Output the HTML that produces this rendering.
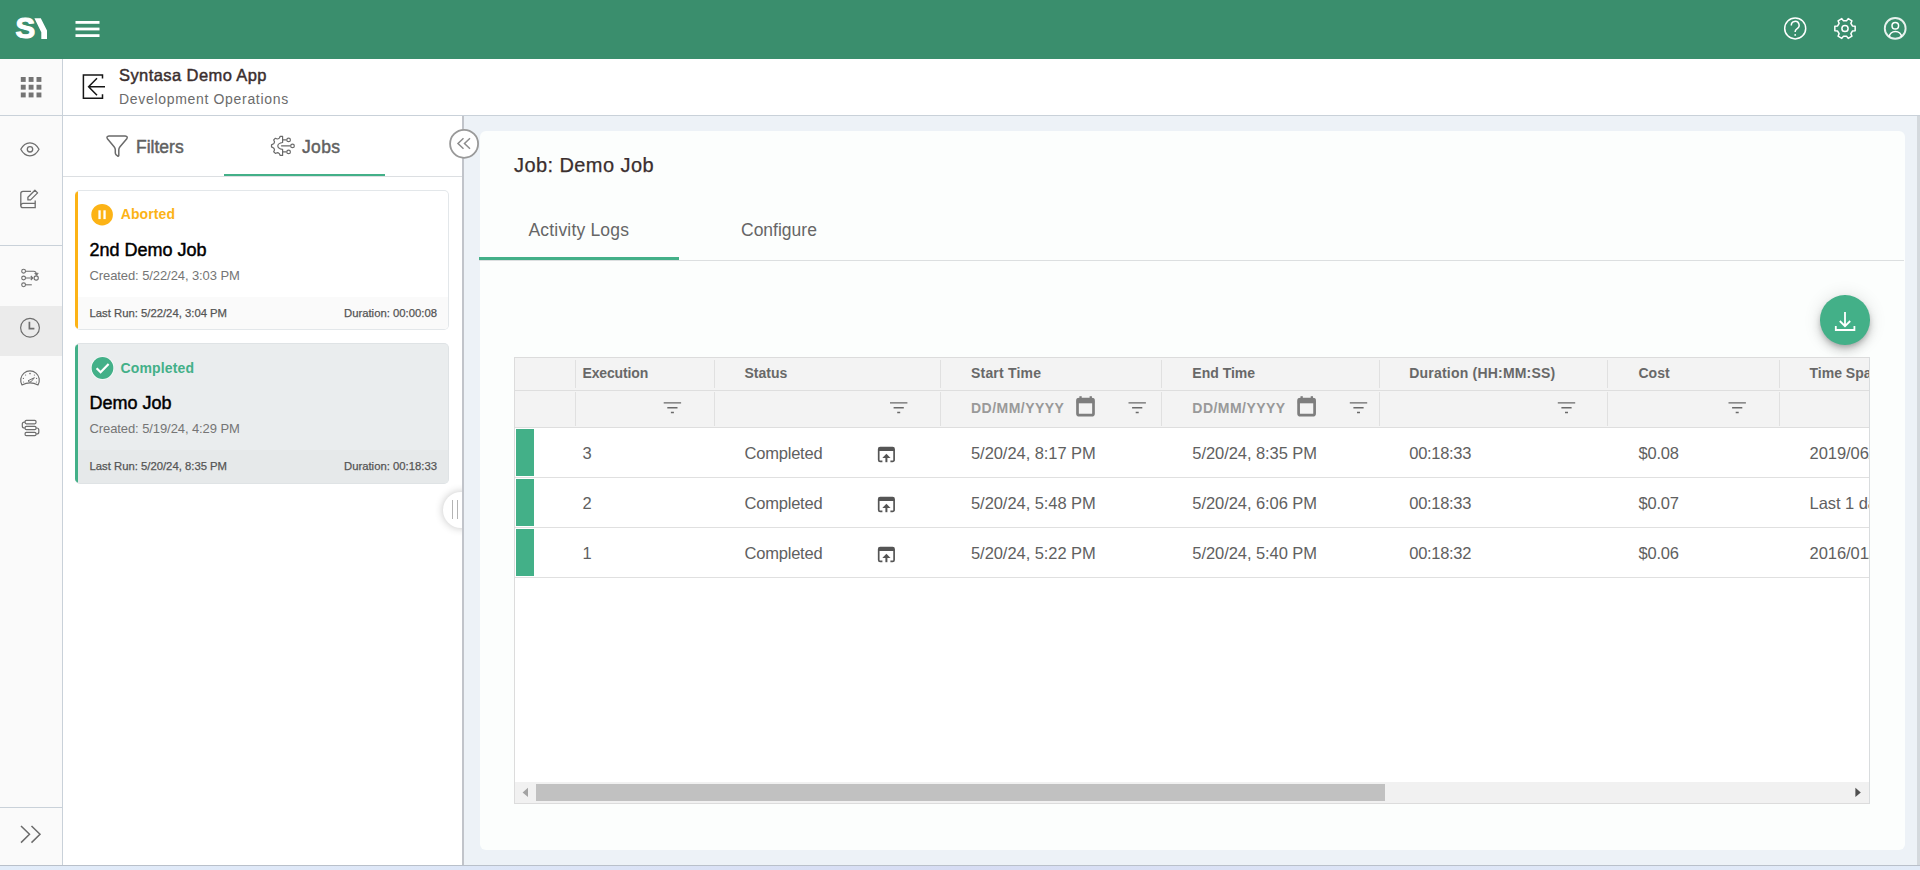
<!DOCTYPE html>
<html lang="en">
<head>
<meta charset="utf-8">
<title>Syntasa Demo App - Development Operations</title>
<style>
*{box-sizing:border-box;margin:0;padding:0}
html,body{width:1920px;height:870px;overflow:hidden;background:#fff}
body{font-family:"Liberation Sans",sans-serif;position:relative;color:#555}
.abs{position:absolute}
.t{position:absolute;white-space:nowrap;line-height:1}
.med{-webkit-text-stroke:0.45px currentColor}
.med2{-webkit-text-stroke:0.25px currentColor}
svg{position:absolute;overflow:visible}
/* top bar */
#topbar{left:0;top:0;width:1920px;height:59px;background:#3a8e6d}
/* left nav */
#nav{left:0;top:59px;width:63px;height:806px;background:#fafafa;border-right:1px solid #c9d1d9}
#navsel{left:0;top:306px;width:62px;height:50px;background:#ebebeb}
.hline{position:absolute;height:1px;background:#c9d1d9}
/* app header */
#apphead{left:63px;top:59px;width:1857px;height:57px;background:#fff;border-bottom:1px solid #c9d1d9}
/* side panel */
#side{left:63px;top:116px;width:399px;height:749px;background:#fff}
#splitter{left:462px;top:116px;width:2px;height:749px;background:#c1c4ca}
/* main */
#main{left:464px;top:116px;width:1453px;height:749px;background:#edf2f7}
#panel{left:479.5px;top:131px;width:1425.5px;height:719px;background:#fcfefd;border-radius:6px}
#rightedge{left:1917px;top:116px;width:3px;height:749px;background:#d4d9dd}
#bottomedge{left:0;top:865px;width:1920px;height:5px;background:linear-gradient(90deg,#e2ecf9 0%,#dde6f7 25%,#d6dcf3 50%,#dde5f6 75%,#e2ebf8 100%);border-top:1px solid #b9c0ca}
/* cards */
.card{position:absolute;left:75px;width:374px;border:1px solid #e3e7ea;border-left:0;border-radius:5px;background:#fff;overflow:hidden}
.card .bar{position:absolute;left:0;top:0;bottom:0;width:3px}
.card .foot{position:absolute;left:3px;right:0;bottom:0;height:32px;background:#fafafa}
/* table */
#grid{left:514px;top:357px;width:1356px;height:447px;border:1px solid #dcdcdc;background:#fff;overflow:hidden}
#ghead{left:0;top:0;width:1354px;height:70px;background:#f3f3f3;border-bottom:1px solid #dedede}
.vsep{position:absolute;width:1px;background:#e0e0e0}
.rowline{position:absolute;left:0;width:1354px;height:1px;background:#e0e0e0}
.gbar{position:absolute;left:1px;width:18px;background:#43b088}
.th{font-weight:bold;font-size:14px;color:#686868}
.td{font-size:16.5px;color:#606060}
.ph{font-weight:bold;font-size:14px;color:#999;letter-spacing:0.47px}
</style>
</head>
<body>
<div id="topbar" class="abs"></div>
<div id="nav" class="abs"></div>
<div id="navsel" class="abs"></div>
<div id="apphead" class="abs"></div>
<div class="hline" style="left:0;top:115px;width:63px"></div>
<div class="hline" style="left:0;top:245px;width:62px"></div>
<div class="hline" style="left:0;top:807px;width:62px"></div>
<div id="side" class="abs"></div>
<div id="main" class="abs"></div>
<div id="splitter" class="abs"></div>
<div id="panel" class="abs"></div>
<div id="rightedge" class="abs"></div>
<div id="bottomedge" class="abs"></div>

<!-- TOPBAR-CONTENT -->
<div class="t" id="x_logoS" style="left:15.4px;top:13px;font-size:29.5px;font-weight:bold;color:#fff;-webkit-text-stroke:1.1px #fff">S</div>
<svg style="left:0;top:0" width="120" height="59" viewBox="0 0 120 59">
  <polygon points="34.4,18.2 40.8,18.2 47,30.4 47,39.1 41.3,39.1 41.3,32.2" fill="#fff"/>
  <rect x="75.5" y="21" width="24" height="2.8" fill="#fff"/>
  <rect x="75.5" y="27.6" width="24" height="2.8" fill="#fff"/>
  <rect x="75.5" y="34.2" width="24" height="2.8" fill="#fff"/>
</svg>
<svg style="left:1780px;top:13px" width="130" height="32" viewBox="1780 13 130 32" fill="none" stroke="#fff" stroke-width="1.5">
  <!-- help -->
  <circle cx="1795.2" cy="28.4" r="10.5"/>
  <path d="M1791.3 25.4 a3.9 3.9 0 1 1 5.6 3.4 c-1.2 0.7 -1.7 1.3 -1.7 2.6 v0.6" stroke-linecap="butt"/>
  <circle cx="1795.2" cy="34.9" r="0.9" fill="#fff" stroke="none"/>
  <!-- gear -->
  <circle cx="1845" cy="28.5" r="3.1"/>
  <path d="M1852.38 25.97 L1855.17 26.33 L1855.17 30.67 L1852.38 31.03 L1850.88 33.63 L1851.96 36.22 L1848.21 38.39 L1846.50 36.15 L1843.50 36.15 L1841.79 38.39 L1838.04 36.22 L1839.12 33.63 L1837.62 31.03 L1834.83 30.67 L1834.83 26.33 L1837.62 25.97 L1839.12 23.37 L1838.04 20.78 L1841.79 18.61 L1843.50 20.85 L1846.50 20.85 L1848.21 18.61 L1851.96 20.78 L1850.88 23.37 Z" stroke-linejoin="round"/>
  <!-- user -->
  <circle cx="1895.2" cy="28.4" r="10.4" stroke-width="1.9" stroke-opacity="0.88"/>
  <circle cx="1895.3" cy="25.8" r="3.3"/>
  <path d="M1889.3 37 a6.1 5.6 0 0 1 12.2 0"/>
</svg>

<!-- NAV-ICONS -->
<svg style="left:0;top:59px" width="62" height="806" viewBox="0 59 62 806" fill="none" stroke="#6e6e6e" stroke-width="1.3">
  <!-- apps grid -->
  <g fill="#747474" stroke="none">
    <rect x="20.80" y="77.00" width="4.9" height="4.9"/><rect x="28.65" y="77.00" width="4.9" height="4.9"/><rect x="36.50" y="77.00" width="4.9" height="4.9"/>
    <rect x="20.80" y="84.75" width="4.9" height="4.9"/><rect x="28.65" y="84.75" width="4.9" height="4.9"/><rect x="36.50" y="84.75" width="4.9" height="4.9"/>
    <rect x="20.80" y="92.50" width="4.9" height="4.9"/><rect x="28.65" y="92.50" width="4.9" height="4.9"/><rect x="36.50" y="92.50" width="4.9" height="4.9"/>
  </g>
  <!-- eye -->
  <path d="M20.8 149.3 C23.2 144.6 26.4 142.8 29.9 142.8 C33.4 142.8 36.6 144.6 39 149.3 C36.6 154 33.4 155.8 29.9 155.8 C26.4 155.8 23.2 154 20.8 149.3 Z" stroke-linejoin="round"/>
  <circle cx="30" cy="149.3" r="2.7"/>
  <!-- edit -->
  <path d="M31 191.4 H23 a2.2 2.2 0 0 0 -2.2 2.2 V205.4 a2.2 2.2 0 0 0 2.2 2.2 H35.2 V200.4" />
  <path d="M20.8 205.6 a2.2 2.2 0 0 1 2.2 -2.2 H35.2" />
  <path d="M27.9 199.9 L27.9 197.2 L34.9 190.2 L37.6 192.9 L30.6 199.9 Z" stroke-linejoin="round"/>
  <!-- pipeline -->
  <g stroke-width="1.1">
  <circle cx="23.6" cy="271.2" r="1.9"/><circle cx="23.6" cy="278" r="1.9"/><circle cx="23.6" cy="284.8" r="1.9"/><circle cx="36.2" cy="278" r="2.1"/>
  <path d="M25.6 271.2 H33.6 Q36.3 271.2 36.6 274.6 M34.6 273.2 L36.7 275 L38.2 272.9"/>
  <path d="M25.6 278 H32.6 M30.8 276 L32.8 278 L30.8 280"/>
  <path d="M25.6 284.8 H31.8"/>
  </g>
  <!-- clock -->
  <circle cx="30" cy="327.8" r="9.4" stroke-width="1.2"/>
  <path d="M29.4 321.8 V328.6 H34.4" stroke-width="1.7"/>
  <!-- gauge -->
  <path d="M22 385 A9.3 9.3 0 1 1 38 385 Q30 380.8 22 385 Z" stroke-linejoin="round" stroke-width="1.2"/>
  <path d="M28 380.8 L34.4 377.7 L31 381.8 Q29 382.6 28 380.8 Z" stroke-width="1" stroke-linejoin="round"/>
  <g fill="#6e6e6e" stroke="none"><circle cx="30" cy="373.6" r="0.8"/><circle cx="25.6" cy="375" r="0.6"/><circle cx="34.4" cy="375" r="0.6"/><circle cx="23.4" cy="378.4" r="0.6"/><circle cx="36.6" cy="378.4" r="0.6"/><circle cx="23.6" cy="382" r="0.6"/><circle cx="36.4" cy="382" r="0.6"/></g>
  <!-- stack -->
  <g stroke-width="1.2">
  <rect x="25.1" y="420.4" width="10.9" height="3.4" rx="1.2"/>
  <rect x="25.1" y="426.3" width="10.9" height="3.4" rx="1.2"/>
  <rect x="25.1" y="432.3" width="10.9" height="3.4" rx="1.2"/>
  <path d="M25.1 422.1 H24.3 a2 2 0 0 0 -2 2 V426 a2 2 0 0 0 2 2 H25.1"/>
  <path d="M36 428 H36.8 a2 2 0 0 1 2 2 V432 a2 2 0 0 1 -2 2 H36"/>
  </g>
  <!-- expand >> -->
  <path d="M21 826 L29.5 834.3 L21 842.6 M31.5 826 L40 834.3 L31.5 842.6" stroke-width="1.5" stroke="#6b6b6b"/>
</svg>

<!-- APPHEAD-CONTENT -->
<svg style="left:78px;top:70px" width="32" height="34" viewBox="78 70 32 34" fill="none" stroke="#161616" stroke-width="1.5">
  <path d="M102.5 78.6 V75 H83.4 V98.3 H102.5 V94.3"/>
  <path d="M105 86.7 H89 M97 78.2 L88.6 86.7 L97 95.2"/>
</svg>
<div class="t med" id="x_apptitle" style="left:119px;top:66.7px;font-size:16.5px;letter-spacing:0.42px;color:#3a2e2e">Syntasa Demo App</div>
<div class="t" id="x_appsub" style="left:119px;top:91.5px;font-size:14px;letter-spacing:0.68px;color:#6b6b6b">Development Operations</div>

<!-- SIDE-CONTENT -->
<div class="hline" style="left:63px;top:176px;width:399px;background:#dcdfe2"></div>
<div class="abs" style="left:224px;top:174px;width:161px;height:2px;background:#43b088"></div>
<svg style="left:100px;top:130px" width="200" height="32" viewBox="100 130 200 32" fill="none" stroke="#6a6a6a" stroke-width="1.3">
  <!-- funnel -->
  <path d="M109 135.9 H125.2 Q128.2 136.2 126.8 138.7 L120 146.8 Q118.8 148.2 118.8 149.8 V155.4 Q118.7 156.6 117.6 156 L116 154.6 Q115.3 153.9 115.3 152.8 V149.8 Q115.3 148.2 114.1 146.8 L107.4 138.7 Q106 136.2 109 135.9 Z" stroke-width="1.5" stroke-linejoin="round"/>
  <!-- jobs icon -->
  <g stroke-width="1.2" stroke-linejoin="round">
  <path d="M282.6 136.4 H280.2 L279.3 138.1 Q278.4 138.9 277.2 139 L275.4 138.3 L273.7 139.9 L274.5 141.8 Q274.3 143 273.6 143.8 L271.5 144.9 V146.9 L273.6 148 Q274.3 148.8 274.5 149.9 L273.7 151.8 L275.4 153.4 L277.2 152.7 Q278.4 152.8 279.3 153.6 L280.2 155.4 H282.6 V149.3 Q277.9 148.6 277.8 145.9 Q277.9 143.2 282.6 142.5 Z"/>
  <path d="M282.8 139.9 H286.6 M281.1 145.9 H290.5 M282.8 151.9 H286.6" stroke-width="1.4"/>
  <circle cx="288.6" cy="139.9" r="1.8"/><circle cx="292.5" cy="145.9" r="1.8"/><circle cx="288.6" cy="151.9" r="1.8"/>
  </g>
</svg>
<div class="t med" id="x_filters" style="left:136px;top:139px;font-size:17.5px;color:#616161">Filters</div>
<div class="t med" id="x_jobs" style="left:302px;top:139px;font-size:17.5px;letter-spacing:0.35px;color:#616161">Jobs</div>

<div class="card" style="top:190px;height:140px">
  <div class="bar" style="background:#fcb316"></div><div class="foot"></div>
</div>
<div class="card" style="top:343px;height:141px;background:#eaedee;border-color:#dfe3e5">
  <div class="bar" style="background:#43b088"></div><div class="foot" style="background:#e6e9ea;height:33px"></div>
</div>
<svg style="left:88px;top:200px" width="30" height="184" viewBox="88 200 30 184">
  <circle cx="102.1" cy="214.7" r="10.8" fill="#fcb316"/>
  <rect x="98.4" y="210.3" width="2.3" height="8.8" fill="#fff"/><rect x="103.4" y="210.3" width="2.3" height="8.8" fill="#fff"/>
  <circle cx="102.5" cy="368" r="11.6" fill="#fff"/>
  <circle cx="102.5" cy="368" r="10.9" fill="#43b088"/>
  <path d="M96.6 368.3 L100.6 372.3 L108.6 364.1" fill="none" stroke="#fff" stroke-width="2.2"/>
</svg>
<div class="t" id="x_aborted" style="left:120.7px;top:207px;font-size:14px;letter-spacing:0.12px;font-weight:bold;color:#fcb316">Aborted</div>
<div class="t med" id="x_c1title" style="left:89.5px;top:240.5px;font-size:18px;color:#000">2nd Demo Job</div>
<div class="t" id="x_c1created" style="left:89.5px;top:269px;font-size:13px;letter-spacing:-0.09px;color:#757575">Created: 5/22/24, 3:03 PM</div>
<div class="t med2" id="x_c1last" style="left:89.5px;top:307.5px;font-size:11.3px;color:#555">Last Run: 5/22/24, 3:04 PM</div>
<div class="t med2" id="x_c1dur" style="left:344px;top:307.5px;font-size:11.3px;color:#555">Duration: 00:00:08</div>

<div class="t" id="x_completed" style="left:120.5px;top:360.5px;font-size:14px;letter-spacing:0.14px;font-weight:bold;color:#43b088">Completed</div>
<div class="t med" id="x_c2title" style="left:89.5px;top:393.5px;font-size:18px;color:#000">Demo Job</div>
<div class="t" id="x_c2created" style="left:89.5px;top:422px;font-size:13px;letter-spacing:-0.09px;color:#757575">Created: 5/19/24, 4:29 PM</div>
<div class="t med2" id="x_c2last" style="left:89.5px;top:460.5px;font-size:11.3px;color:#555">Last Run: 5/20/24, 8:35 PM</div>
<div class="t med2" id="x_c2dur" style="left:344px;top:460.5px;font-size:11.3px;color:#555">Duration: 00:18:33</div>

<!-- drag handle -->
<div class="abs" style="left:425px;top:480px;width:37px;height:60px;overflow:hidden">
  <div class="abs" style="left:18px;top:12px;width:36px;height:36px;border-radius:50%;background:#fff;box-shadow:0 0 9px rgba(0,0,0,.24)"></div>
  <div class="abs" style="left:27px;top:20px;width:1px;height:19px;background:#b4b4b4"></div>
  <div class="abs" style="left:32px;top:20px;width:1px;height:19px;background:#b4b4b4"></div>
</div>
<!-- collapse button -->
<svg style="left:447px;top:127px" width="34" height="34" viewBox="447 127 34 34" fill="none">
  <circle cx="464.1" cy="143.8" r="14" fill="#fff" stroke="#999" stroke-width="1.8"/>
  <path d="M463.5 138.3 L458 143.5 L463.5 148.7 M470 138.3 L464.5 143.5 L470 148.7" stroke="#8c8c8c" stroke-width="1.5"/>
</svg>

<!-- MAIN-CONTENT -->
<div class="t med2" id="x_title" style="left:514px;top:155px;font-size:20px;letter-spacing:0.42px;color:#3a2e2e">Job: Demo Job</div>
<div class="t" id="x_tab1" style="left:528.5px;top:221.6px;font-size:17.5px;letter-spacing:0.18px;color:#666">Activity Logs</div>
<div class="t" id="x_tab2" style="left:741px;top:221.6px;font-size:17.5px;color:#666">Configure</div>
<div class="hline" style="left:479px;top:260px;width:1425px;background:#dcdfe0"></div>
<div class="abs" style="left:479px;top:257px;width:200px;height:3px;background:#43b088"></div>
<!-- FAB -->
<div class="abs" style="left:1820.3px;top:295.1px;width:49.6px;height:49.6px;border-radius:50%;background:#43b088;box-shadow:0 3px 5px -1px rgba(0,0,0,.2),0 6px 10px 0 rgba(0,0,0,.14),0 1px 18px 0 rgba(0,0,0,.12)"></div>
<svg style="left:1830px;top:306px" width="30" height="30" viewBox="1830 306 30 30" fill="none" stroke="#fff" stroke-width="1.5">
  <path d="M1845 312 V326 M1839.8 321 L1845 326.2 L1850.2 321 M1835.8 326 V330 H1854.4 V326" stroke-width="1.8"/>
</svg>
<!-- GRID -->
<div id="grid" class="abs"><div id="ghead" class="abs"></div></div>
<div class="rowline" style="left:515px;top:390px;background:#dedede"></div>
<div class="vsep" style="left:575px;top:360px;height:28px"></div><div class="vsep" style="left:575px;top:392px;height:34px"></div><div class="vsep" style="left:714px;top:360px;height:28px"></div><div class="vsep" style="left:714px;top:392px;height:34px"></div><div class="vsep" style="left:940px;top:360px;height:28px"></div><div class="vsep" style="left:940px;top:392px;height:34px"></div><div class="vsep" style="left:1161px;top:360px;height:28px"></div><div class="vsep" style="left:1161px;top:392px;height:34px"></div><div class="vsep" style="left:1379px;top:360px;height:28px"></div><div class="vsep" style="left:1379px;top:392px;height:34px"></div><div class="vsep" style="left:1607px;top:360px;height:28px"></div><div class="vsep" style="left:1607px;top:392px;height:34px"></div><div class="vsep" style="left:1779px;top:360px;height:28px"></div><div class="vsep" style="left:1779px;top:392px;height:34px"></div>
<div class="abs" style="left:1779px;top:357px;width:91px;height:447px;overflow:hidden">
  <div class="t th" id="x_h7" style="left:30.5px;top:9px">Time Span</div>
  <div class="t td" id="x_r0ts" style="letter-spacing:-0.05px;left:30.5px;top:88.3px">2019/06/01</div>
  <div class="t td" id="x_r1ts" style="letter-spacing:-0.05px;left:30.5px;top:138.3px">Last 1 day</div>
  <div class="t td" id="x_r2ts" style="letter-spacing:-0.05px;left:30.5px;top:188.3px">2016/01/01</div>
</div>
<div class="t th" id="x_h1" style="letter-spacing:-0.15px;left:582.5px;top:366px">Execution</div>
<div class="t th" id="x_h2" style="left:744.5px;top:366px">Status</div>
<div class="t th" id="x_h3" style="letter-spacing:0.19px;left:971px;top:366px">Start Time</div>
<div class="t th" id="x_h4" style="left:1192.3px;top:366px">End Time</div>
<div class="t th" id="x_h5" style="letter-spacing:0.2px;left:1409.3px;top:366px">Duration (HH:MM:SS)</div>
<div class="t th" id="x_h6" style="left:1638.5px;top:366px">Cost</div>
<div class="t ph" id="x_ph1" style="left:971px;top:401px">DD/MM/YYYY</div>
<div class="t ph" id="x_ph2" style="left:1192.3px;top:401px">DD/MM/YYYY</div>
<div class="gbar" style="left:516px;top:429px;height:47px"></div>
<div class="rowline" style="left:515px;top:477px"></div>
<div class="t td" id="x_r0n" style="left:582.5px;top:445.3px">3</div>
<div class="t td" id="x_r0s" style="letter-spacing:-0.21px;left:744.5px;top:445.3px">Completed</div>
<div class="t td" id="x_r0st" style="letter-spacing:-0.06px;left:971px;top:445.3px">5/20/24, 8:17 PM</div>
<div class="t td" id="x_r0et" style="letter-spacing:-0.06px;left:1192.3px;top:445.3px">5/20/24, 8:35 PM</div>
<div class="t td" id="x_r0du" style="letter-spacing:-0.3px;left:1409.3px;top:445.3px">00:18:33</div>
<div class="t td" id="x_r0co" style="letter-spacing:-0.23px;left:1638.5px;top:445.3px">$0.08</div>
<div class="gbar" style="left:516px;top:479px;height:47px"></div>
<div class="rowline" style="left:515px;top:527px"></div>
<div class="t td" id="x_r1n" style="left:582.5px;top:495.3px">2</div>
<div class="t td" id="x_r1s" style="letter-spacing:-0.21px;left:744.5px;top:495.3px">Completed</div>
<div class="t td" id="x_r1st" style="letter-spacing:-0.06px;left:971px;top:495.3px">5/20/24, 5:48 PM</div>
<div class="t td" id="x_r1et" style="letter-spacing:-0.06px;left:1192.3px;top:495.3px">5/20/24, 6:06 PM</div>
<div class="t td" id="x_r1du" style="letter-spacing:-0.3px;left:1409.3px;top:495.3px">00:18:33</div>
<div class="t td" id="x_r1co" style="letter-spacing:-0.23px;left:1638.5px;top:495.3px">$0.07</div>
<div class="gbar" style="left:516px;top:529px;height:47px"></div>
<div class="rowline" style="left:515px;top:577px"></div>
<div class="t td" id="x_r2n" style="left:582.5px;top:545.3px">1</div>
<div class="t td" id="x_r2s" style="letter-spacing:-0.21px;left:744.5px;top:545.3px">Completed</div>
<div class="t td" id="x_r2st" style="letter-spacing:-0.06px;left:971px;top:545.3px">5/20/24, 5:22 PM</div>
<div class="t td" id="x_r2et" style="letter-spacing:-0.06px;left:1192.3px;top:545.3px">5/20/24, 5:40 PM</div>
<div class="t td" id="x_r2du" style="letter-spacing:-0.3px;left:1409.3px;top:545.3px">00:18:32</div>
<div class="t td" id="x_r2co" style="letter-spacing:-0.23px;left:1638.5px;top:545.3px">$0.06</div>

<svg style="left:514px;top:357px" width="1356" height="447" viewBox="514 357 1356 447">
  <g fill="none" stroke="#6a6a6a" stroke-width="1.4">
  <path d="M663.7 402.9 h17.4 M667.3 407.7 h10.2 M670.9 412.5 h3"/><path d="M890.0 402.9 h17.4 M893.6 407.7 h10.2 M897.2 412.5 h3"/><path d="M1128.5 402.9 h17.4 M1132.1 407.7 h10.2 M1135.7 412.5 h3"/><path d="M1349.8 402.9 h17.4 M1353.4 407.7 h10.2 M1357.0 412.5 h3"/><path d="M1557.8 402.9 h17.4 M1561.4 407.7 h10.2 M1565.0 412.5 h3"/><path d="M1728.5 402.9 h17.4 M1732.1 407.7 h10.2 M1735.7 412.5 h3"/>
  </g>
  <g><rect x="1077.5" y="399.1" width="16" height="16.1" rx="1.8" fill="none" stroke="#7e7e7e" stroke-width="2.7"/><rect x="1076.7" y="398.6" width="17.6" height="4.7" fill="#7e7e7e"/><rect x="1079.4" y="396.2" width="2.3" height="3" fill="#7e7e7e"/><rect x="1089.6" y="396.2" width="2.3" height="3" fill="#7e7e7e"/></g><g><rect x="1298.6" y="399.1" width="16" height="16.1" rx="1.8" fill="none" stroke="#7e7e7e" stroke-width="2.7"/><rect x="1297.8" y="398.6" width="17.6" height="4.7" fill="#7e7e7e"/><rect x="1300.5" y="396.2" width="2.3" height="3" fill="#7e7e7e"/><rect x="1310.7" y="396.2" width="2.3" height="3" fill="#7e7e7e"/></g>
  <g fill="none" stroke="#555" stroke-width="1.7"><path d="M882.4 461.4 H880.2 a1.5 1.5 0 0 1 -1.5 -1.5 V449.2 a1.5 1.5 0 0 1 1.5 -1.5 H892.6 a1.5 1.5 0 0 1 1.5 1.5 V459.9 a1.5 1.5 0 0 1 -1.5 1.5 H890.4"/><path d="M878.7 449.4 H894.1" stroke-width="3.2"/><path d="M886.4 462.2 V456.4" stroke-width="2"/><path d="M882.3 457.9 L886.4 453.7 L890.5 457.9 Z" fill="#555" stroke="none"/></g><g fill="none" stroke="#555" stroke-width="1.7"><path d="M882.4 511.4 H880.2 a1.5 1.5 0 0 1 -1.5 -1.5 V499.2 a1.5 1.5 0 0 1 1.5 -1.5 H892.6 a1.5 1.5 0 0 1 1.5 1.5 V509.9 a1.5 1.5 0 0 1 -1.5 1.5 H890.4"/><path d="M878.7 499.4 H894.1" stroke-width="3.2"/><path d="M886.4 512.2 V506.4" stroke-width="2"/><path d="M882.3 507.9 L886.4 503.7 L890.5 507.9 Z" fill="#555" stroke="none"/></g><g fill="none" stroke="#555" stroke-width="1.7"><path d="M882.4 561.4 H880.2 a1.5 1.5 0 0 1 -1.5 -1.5 V549.2 a1.5 1.5 0 0 1 1.5 -1.5 H892.6 a1.5 1.5 0 0 1 1.5 1.5 V559.9 a1.5 1.5 0 0 1 -1.5 1.5 H890.4"/><path d="M878.7 549.4 H894.1" stroke-width="3.2"/><path d="M886.4 562.2 V556.4" stroke-width="2"/><path d="M882.3 557.9 L886.4 553.7 L890.5 557.9 Z" fill="#555" stroke="none"/></g>
</svg>
<!-- cover clipped right col -->
<div class="abs" style="left:1869px;top:357px;width:1px;height:447px;background:#d9dcde"></div>
<!-- scrollbar -->
<div class="abs" style="left:515px;top:782px;width:1354px;height:21px;background:#f1f1f1"></div>
<div class="abs" style="left:536px;top:784px;width:849px;height:17px;background:#c1c1c1"></div>
<svg style="left:515px;top:783px" width="1354" height="20" viewBox="515 783 1354 20">
  <path d="M528 787.8 V797 L522.6 792.4 Z" fill="#a3a3a3"/>
  <path d="M1855.4 787.8 V797 L1860.8 792.4 Z" fill="#505050"/>
</svg>

</body>
</html>
